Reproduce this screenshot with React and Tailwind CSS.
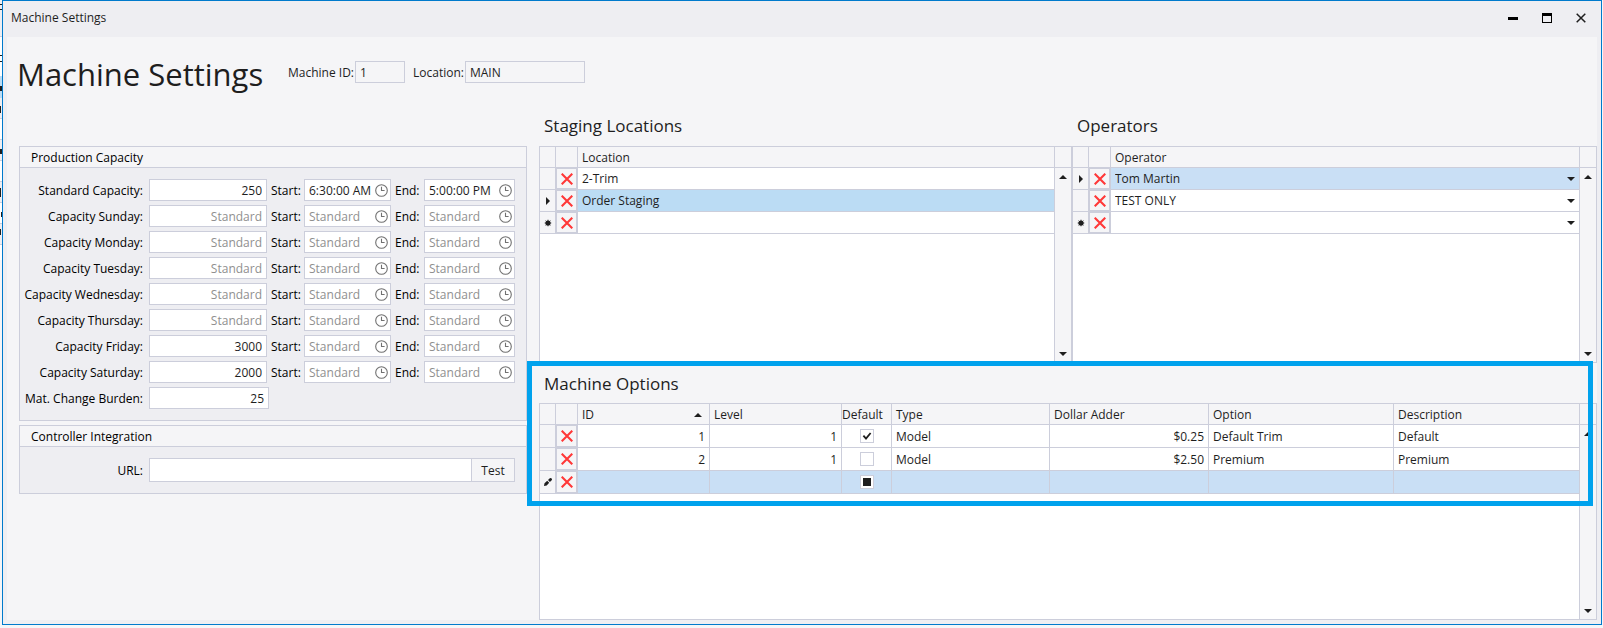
import { useEffect, useRef, useState } from "react";

const capacityRows = [
  { id: "standard", label: "Standard Capacity:", value: "250", start: "6:30:00 AM", end: "5:00:00 PM" },
  { id: "sunday", label: "Capacity Sunday:" },
  { id: "monday", label: "Capacity Monday:" },
  { id: "tuesday", label: "Capacity Tuesday:" },
  { id: "wednesday", label: "Capacity Wednesday:" },
  { id: "thursday", label: "Capacity Thursday:" },
  { id: "friday", label: "Capacity Friday:", value: "3000" },
  { id: "saturday", label: "Capacity Saturday:", value: "2000" },
];

const machineOptions = [
  { id: "1", level: "1", isDefault: true, type: "Model", adder: "$0.25", option: "Default Trim", description: "Default" },
  { id: "2", level: "1", isDefault: false, type: "Model", adder: "$2.50", option: "Premium", description: "Premium" },
  { isNew: true },
];

function Arrow({ up, className = "" }) {
  return (
    <svg viewBox="0 0 8 4" className={`h-1 w-2 ${className}`} fill="#1e1e1e" aria-hidden="true">
      <path d={up ? "M0 4 4 0 8 4Z" : "M0 0h8L4 4Z"} />
    </svg>
  );
}

function RowMarker({ type }) {
  if (type === "current") {
    return (
      <svg viewBox="0 0 4 8" className="mx-auto h-2 w-1" fill="#1e1e1e">
        <path d="M0 0 4 4 0 8Z" />
      </svg>
    );
  }
  if (type === "new") {
    return (
      <svg viewBox="0 0 8 8" className="mx-auto h-2 w-2" fill="#1e1e1e">
        <circle cx="4" cy="4" r="2.6" />
        <path d="M4 .7v6.6M.7 4h6.6M1.6 1.6l4.8 4.8M6.4 1.6 1.6 6.4" stroke="#1e1e1e" strokeWidth=".8" />
      </svg>
    );
  }
  if (type === "edit") {
    return (
      <svg viewBox="0 0 8 8" className="mx-auto h-2 w-2" fill="#1e1e1e">
        <path d="M0 8 .5 5.3 3.2 2.8 5.2 4.8 2.7 7.5ZM4 2.1 5.8.3Q6.8-.3 7.6.4T7.7 2.2L5.9 4Z" />
      </svg>
    );
  }
  return null;
}

function DeleteButton({ tall }) {
  return (
    <button
      aria-label="Delete row"
      className={`flex w-full items-center justify-center border border-[#cccedb] bg-[#f5f5f7] ${
        tall ? "h-[22px]" : "h-[21px]"
      }`}
    >
      <svg viewBox="0 0 12 12" className="h-3 w-3" stroke="#ff3838" strokeWidth="2.1">
        <path d="M.7.7l10.6 10.6M11.3.7.7 11.3" />
      </svg>
    </button>
  );
}

function RowStart({ marker, tall }) {
  return (
    <>
      <td className="border-r border-b border-[#cccedb] bg-[#f5f5f7] p-0">
        <RowMarker type={marker} />
      </td>
      <td className="border-r border-b border-[#cccedb] p-0">
        <DeleteButton tall={tall} />
      </td>
    </>
  );
}

function Th({ children, last, tight }) {
  return (
    <th
      className={`h-[21px] border-b border-[#cccedb] pt-px pb-0 text-left font-normal whitespace-nowrap ${
        tight ? "px-0 text-center" : "px-1"
      } ${last ? "" : "border-r"}`}
    >
      {children}
    </th>
  );
}

function ScrollBar() {
  return (
    <div className="flex w-[17px] flex-none flex-col border-l border-[#cccedb] bg-[#f5f5f7]">
      <div className="h-[21px] border-b border-[#cccedb]" />
      <button aria-label="Scroll up" className="flex h-[18px] items-center justify-center">
        <Arrow up />
      </button>
      <div className="flex-1" />
      <button aria-label="Scroll down" className="flex h-[17px] items-center justify-center">
        <Arrow />
      </button>
    </div>
  );
}

function Grid({ children }) {
  return (
    <div className="flex flex-1 border border-[#cccedb] bg-white">
      <div className="min-w-0 flex-1">{children}</div>
      <ScrollBar />
    </div>
  );
}

function TimeField({ id, value, className }) {
  return (
    <div className={`flex h-[22px] items-center border border-[#cccedb] bg-white pr-[2px] ${className}`}>
      <input
        id={id}
        defaultValue={value}
        placeholder="Standard"
        className="h-full w-full min-w-0 bg-transparent pl-1 outline-none placeholder:text-[#8f8f8f]"
      />
      <button aria-label="Pick time" className="flex-none">
        <svg viewBox="0 0 13 13" className="h-[13px] w-[13px]" fill="none" stroke="#717171" strokeWidth="1.1">
          <circle cx="6.5" cy="6.5" r="5.8" />
          <path d="M6.5 2.7v3.8H9.6" />
        </svg>
      </button>
    </div>
  );
}

function CapacityRow({ row }) {
  return (
    <div className="flex items-center">
      <label htmlFor={row.id} className="w-[129px] flex-none pt-px pr-[6px] text-right whitespace-nowrap text-black">
        {row.label}
      </label>
      <input
        id={row.id}
        defaultValue={row.value}
        placeholder="Standard"
        className="h-[22px] w-[118px] border border-[#cccedb] bg-white px-1 text-right outline-none placeholder:text-[#8f8f8f]"
      />
      <label htmlFor={`${row.id}-start`} className="w-[37px] flex-none pt-px pl-1 text-black">
        Start:
      </label>
      <TimeField id={`${row.id}-start`} value={row.start} className="w-[87px]" />
      <label htmlFor={`${row.id}-end`} className="w-[33px] flex-none pt-px pl-1 text-black">
        End:
      </label>
      <TimeField id={`${row.id}-end`} value={row.end} className="min-w-0 flex-1" />
    </div>
  );
}

function Panel({ title, children }) {
  return (
    <section className="border border-[#cccedb] bg-[#eeeef2]">
      <h2 className="h-[21px] border-b border-[#cccedb] bg-[#f5f5f7] pl-[11px] leading-[22px] text-black">{title}</h2>
      <div className="pt-[11px] pr-[11px]">{children}</div>
    </section>
  );
}

function OperatorCell({ value, selected, last }) {
  return (
    <td className={`relative border-b border-[#cccedb] p-0 ${selected ? "bg-[#c9dff5]" : "bg-white"}`}>
      <select
        aria-label="Operator"
        defaultValue={value}
        className="block h-[21px] w-full appearance-none bg-transparent px-1 outline-none"
      >
        {last ? <option value=""></option> : null}
        <option>Tom Martin</option>
        <option>TEST ONLY</option>
      </select>
      <Arrow className="pointer-events-none absolute top-[9px] right-1" />
    </td>
  );
}

function DefaultCheck({ initial, mixed }) {
  const ref = useRef(null);
  const [checked, setChecked] = useState(Boolean(initial));
  const [isMixed, setIsMixed] = useState(Boolean(mixed));

  useEffect(() => {
    ref.current.indeterminate = isMixed;
  }, [isMixed]);

  return (
    <label className="relative mx-auto block h-[14px] w-[14px]">
      <input
        ref={ref}
        type="checkbox"
        aria-label="Default"
        checked={checked}
        onChange={(e) => {
          setChecked(e.target.checked);
          setIsMixed(false);
        }}
        className="block h-[14px] w-[14px] appearance-none border border-[#cccedb] bg-white"
      />
      {isMixed ? <span className="pointer-events-none absolute inset-[3px] bg-[#1e1e1e]" /> : null}
      {checked && !isMixed ? (
        <svg
          viewBox="0 0 14 14"
          className="pointer-events-none absolute inset-0"
          fill="none"
          stroke="#1e1e1e"
          strokeWidth="1.8"
        >
          <path d="M3.4 6.6 6 9.6 10.6 4" />
        </svg>
      ) : null}
    </label>
  );
}

function StagingLocations() {
  const rows = [
    { name: "2-Trim" },
    { name: "Order Staging", marker: "current" },
    { name: "", marker: "new" },
  ];

  return (
    <section className="flex min-w-0 flex-[533] flex-col">
      <h2 className="h-[31px] pl-[5px] text-[17px] leading-[22px]">Staging Locations</h2>
      <Grid>
        <table className="w-full table-fixed border-separate border-spacing-0">
          <colgroup>
            <col className="w-4" />
            <col className="w-[22px]" />
            <col />
          </colgroup>
          <thead className="bg-[#f5f5f7]">
            <tr>
              <Th />
              <Th />
              <Th last>Location</Th>
            </tr>
          </thead>
          <tbody>
            {rows.map((row, i) => (
              <tr key={i} className="h-[22px]">
                <RowStart marker={row.marker} />
                <td
                  className={`border-b border-[#cccedb] px-1 py-0 ${
                    row.marker === "current" ? "bg-[#bbdcf4]" : "bg-white"
                  }`}
                >
                  {row.name}
                </td>
              </tr>
            ))}
          </tbody>
        </table>
      </Grid>
    </section>
  );
}

function Operators() {
  return (
    <section className="flex min-w-0 flex-[525] flex-col">
      <h2 className="h-[31px] pl-[5px] text-[17px] leading-[22px]">Operators</h2>
      <Grid>
        <table className="w-full table-fixed border-separate border-spacing-0">
          <colgroup>
            <col className="w-4" />
            <col className="w-[22px]" />
            <col />
          </colgroup>
          <thead className="bg-[#f5f5f7]">
            <tr>
              <Th />
              <Th />
              <Th last>Operator</Th>
            </tr>
          </thead>
          <tbody>
            <tr>
              <RowStart marker="current" />
              <OperatorCell value="Tom Martin" selected />
            </tr>
            <tr>
              <RowStart />
              <OperatorCell value="TEST ONLY" />
            </tr>
            <tr>
              <RowStart marker="new" />
              <OperatorCell value="" last />
            </tr>
          </tbody>
        </table>
      </Grid>
    </section>
  );
}

function MachineOptions() {
  const cell = "border-b border-[#cccedb] px-1 pt-px pb-0";

  return (
    <section className="relative flex flex-1 flex-col pt-[11px]">
      <h2 className="h-[29px] pl-[5px] text-[17px] leading-5">Machine Options</h2>
      <Grid>
        <table className="w-full table-fixed border-separate border-spacing-0">
          <colgroup>
            <col className="w-4" />
            <col className="w-[22px]" />
            <col className="w-[132px]" />
            <col className="w-[132px]" />
            <col className="w-[50px]" />
            <col className="w-[158px]" />
            <col className="w-[159px]" />
            <col className="w-[185px]" />
            <col />
          </colgroup>
          <thead className="bg-[#f5f5f7]">
            <tr>
              <Th />
              <Th />
              <Th>
                <span className="flex items-center justify-between pr-[3px]">
                  ID
                  <Arrow up />
                </span>
              </Th>
              <Th>Level</Th>
              <Th tight>Default</Th>
              <Th>Type</Th>
              <Th>Dollar Adder</Th>
              <Th>Option</Th>
              <Th last>Description</Th>
            </tr>
          </thead>
          <tbody>
            {machineOptions.map((row, i) => (
              <tr key={i} className={`h-[23px] ${row.isNew ? "bg-[#c9dff5]" : "bg-white"}`}>
                <RowStart marker={row.isNew ? "edit" : undefined} tall />
                <td className={`${cell} border-r text-right`}>{row.id}</td>
                <td className={`${cell} border-r text-right`}>{row.level}</td>
                <td className="border-r border-b border-[#cccedb] p-0">
                  <DefaultCheck initial={row.isDefault} mixed={row.isNew} />
                </td>
                <td className={`${cell} border-r`}>{row.type}</td>
                <td className={`${cell} border-r text-right`}>{row.adder}</td>
                <td className={`${cell} border-r`}>{row.option}</td>
                <td className={cell}>{row.description}</td>
              </tr>
            ))}
          </tbody>
        </table>
      </Grid>
      {/* highlight frame around the options rows */}
      <div className="pointer-events-none absolute top-[-2px] right-1 left-[-12px] h-[145px] border-[5px] border-[#00a2ed]" />
    </section>
  );
}

function TitleBar() {
  const button = "flex h-[34px] w-[34px] items-center justify-center";

  return (
    <header className="flex h-9 items-center pr-[3px] pb-[2px] pl-2">
      <span className="flex-1">Machine Settings</span>
      <button aria-label="Minimize" className={button}>
        <span className="h-[3px] w-[10px] bg-black" />
      </button>
      <button aria-label="Maximize" className={button}>
        <span className="h-[10px] w-[10px] border border-t-[3px] border-black" />
      </button>
      <button aria-label="Close" className={button}>
        <svg viewBox="0 0 10 10" className="h-[10px] w-[10px]" stroke="#1e1e1e" strokeWidth="1.5">
          <path d="M.7.7l8.6 8.6M9.3.7.7 9.3" />
        </svg>
      </button>
    </header>
  );
}

// sliver of the parent window that shows past the dialog's left edge
function ParentEdge() {
  return (
    <svg className="w-[2px] flex-none self-start" viewBox="0 0 2 260" height="260" aria-hidden="true">
      <path d="M0 0h2v36H0z" fill="#eeeef2" />
      <path d="M0 36h2v224H0z" fill="#fff" />
      <path d="M0 76h2v22H0z" fill="#bbdcf4" />
      <path d="M0 98h2v20H0zM0 140h2v20H0zM0 181h2v21H0zM0 223h2v21H0z" fill="#eeeef2" />
      <path d="M0 36h2v1H0zM0 118h2v1H0zM0 139h2v1H0zM0 160h2v1H0zM0 181h2v1H0zM0 202h2v1H0zM0 223h2v1H0zM0 244h2v1H0z" fill="#cccedb" />
      <path d="M0 4h2v1H0zM0 9h2v1H0zM0 55h2v1H0zM0 61h2v1H0zM0 86h2v5H0zM0 106h1v7H0zM0 149h2v5H0zM0 188h1v9H0zM1 212h1v5H1zM0 229h1v6H0z" fill="#1e1e1e" />
    </svg>
  );
}

export default function App() {
  return (
    <div className="flex min-h-screen bg-[#f5f5f7] pr-px pb-[3px] font-['Open_Sans','Noto_Sans',sans-serif] text-xs text-[#1e1e1e]">
      <ParentEdge />
      <div className="flex min-w-0 flex-1 flex-col border border-[#007acc] bg-[#eeeef2]">
        <TitleBar />
        <main className="mx-1 mb-1 flex flex-1 flex-col bg-[#f5f5f7]">
          <div className="flex h-[78px] items-start pl-[10px]">
            <h1 className="w-[271px] pt-[17px] text-[31px] leading-10 whitespace-nowrap">Machine Settings</h1>
            <div className="flex items-center pt-6">
              <label htmlFor="machine-id" className="pt-px">
                Machine ID:
              </label>
              <input
                id="machine-id"
                readOnly
                defaultValue="1"
                className="ml-px h-[22px] w-[50px] border border-[#cccedb] bg-transparent px-1 outline-none"
              />
              <label htmlFor="location" className="ml-2 pt-px">
                Location:
              </label>
              <input
                id="location"
                readOnly
                defaultValue="MAIN"
                className="ml-px h-[22px] w-[120px] border border-[#cccedb] bg-transparent px-1 outline-none"
              />
            </div>
          </div>

          <div className="flex flex-1">
            <div className="flex w-[532px] flex-none flex-col gap-1 pt-[31px] pr-3 pl-3">
              <Panel title="Production Capacity">
                <div className="flex flex-col gap-1 pb-[11px]">
                  {capacityRows.map((row) => (
                    <CapacityRow key={row.id} row={row} />
                  ))}
                  <div className="flex items-center">
                    <label
                      htmlFor="burden"
                      className="w-[129px] flex-none pt-px pr-[6px] text-right whitespace-nowrap text-black"
                    >
                      Mat. Change Burden:
                    </label>
                    <input
                      id="burden"
                      defaultValue="25"
                      className="h-[22px] w-[120px] border border-[#cccedb] bg-white px-1 text-right outline-none"
                    />
                  </div>
                </div>
              </Panel>
              <Panel title="Controller Integration">
                <div className="flex items-center pb-[11px]">
                  <label htmlFor="url" className="w-[129px] flex-none pt-px pr-[6px] text-right text-black">
                    URL:
                  </label>
                  <input
                    id="url"
                    className="h-6 min-w-0 flex-1 border border-[#cccedb] bg-white px-1 outline-none"
                  />
                  <button className="h-6 w-[43px] border border-l-0 border-[#cccedb] bg-[#f5f5f7] pt-px">Test</button>
                </div>
              </Panel>
            </div>

            <div className="flex min-w-0 flex-1 flex-col">
              <div className="flex h-[248px]">
                <StagingLocations />
                <Operators />
              </div>
              <MachineOptions />
            </div>
          </div>
        </main>
      </div>
    </div>
  );
}
